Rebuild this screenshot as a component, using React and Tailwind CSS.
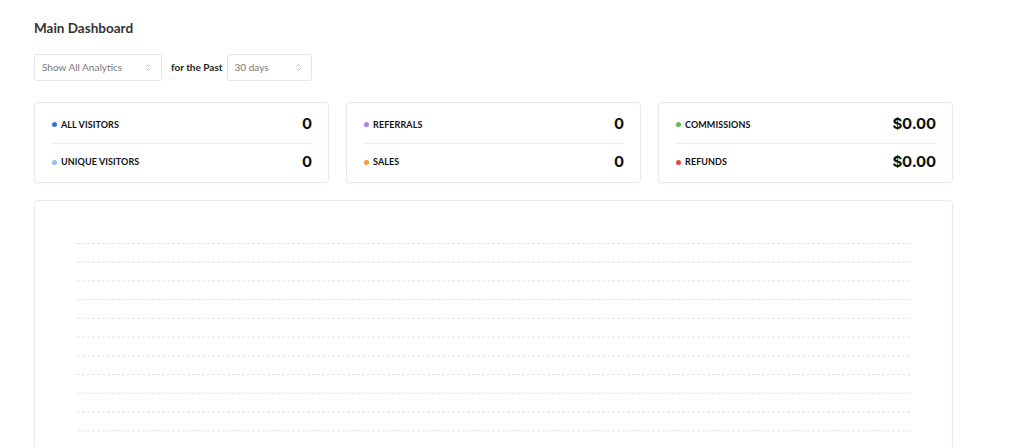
import { ChevronsUpDown } from "lucide-react";

const groups = [
  [
    { label: "ALL VISITORS", value: "0", dot: "bg-[#3b6fe0]" },
    { label: "UNIQUE VISITORS", value: "0", dot: "bg-[#8ec1f7]" },
  ],
  [
    { label: "REFERRALS", value: "0", dot: "bg-[#b57bf0]" },
    { label: "SALES", value: "0", dot: "bg-[#f59a3c]" },
  ],
  [
    { label: "COMMISSIONS", value: "$0.00", dot: "bg-[#5cc04a]" },
    { label: "REFUNDS", value: "$0.00", dot: "bg-[#e0443f]" },
  ],
];

function Select({ text, width }) {
  return (
    <div
      className={
        "flex h-[27px] items-center justify-between rounded-[3px] border border-[#e6e6ea] bg-white pl-[7px] pr-[8px] " +
        width
      }
    >
      <span className="text-[10px] text-[#7a7a7a]">{text}</span>
      <ChevronsUpDown size={9} strokeWidth={1.6} className="text-[#9a9a9a]" />
    </div>
  );
}

function StatCard({ rows }) {
  return (
    <div className="rounded-[4px] border border-[#e8e8ee] bg-white pb-[2px] pl-[17px] pr-[16px] pt-[3px] shadow-[0_1px_2px_rgba(0,0,0,0.03)]">
      {rows.map((r, i) => (
        <div
          key={r.label}
          className={
            "flex h-[37px] items-center justify-between " +
            (i > 0 ? "border-t border-[#eeeef2]" : "")
          }
        >
          <div className="flex items-center gap-[4px]">
            <span className={"h-[5px] w-[5px] rounded-full " + r.dot} />
            <span className="text-[9px] font-bold tracking-[0.01em] text-[#111]">{r.label}</span>
          </div>
          <span className="font-['Inter',sans-serif] text-[15px] font-bold tracking-[-0.01em] text-[#111]">
            {r.value}
          </span>
        </div>
      ))}
    </div>
  );
}

export default function App() {
  const lines = Array.from({ length: 14 }, (_, i) => 42.5 + i * 18.72);
  return (
    <div className="min-h-[447px] bg-white pl-[34px] pt-[18px] font-['Lato',sans-serif]">
      <div className="w-[919px]">
        <h1 className="text-[13.5px] font-bold leading-[20px] text-[#333]">Main Dashboard</h1>

        <div className="mt-[16px] flex items-center">
          <Select text="Show All Analytics" width="w-[128px]" />
          <span className="ml-[9px] mr-[4px] text-[10px] font-bold text-[#222]">for the Past</span>
          <Select text="30 days" width="w-[85px]" />
        </div>

        <div className="mt-[21px] grid grid-cols-3 gap-[17px]">
          {groups.map((g, i) => (
            <StatCard key={i} rows={g} />
          ))}
        </div>

        <div className="mt-[17px] h-[260px] rounded-[4px] border border-[#e8e8ee] bg-white">
          <svg width="100%" height="100%" className="block">
            {lines.map((y) => (
              <line
                key={y}
                x1="42"
                x2="877"
                y1={y}
                y2={y}
                stroke="#e2e2ea"
                strokeWidth="1"
                strokeDasharray="3 2"
              />
            ))}
          </svg>
        </div>
      </div>
    </div>
  );
}
